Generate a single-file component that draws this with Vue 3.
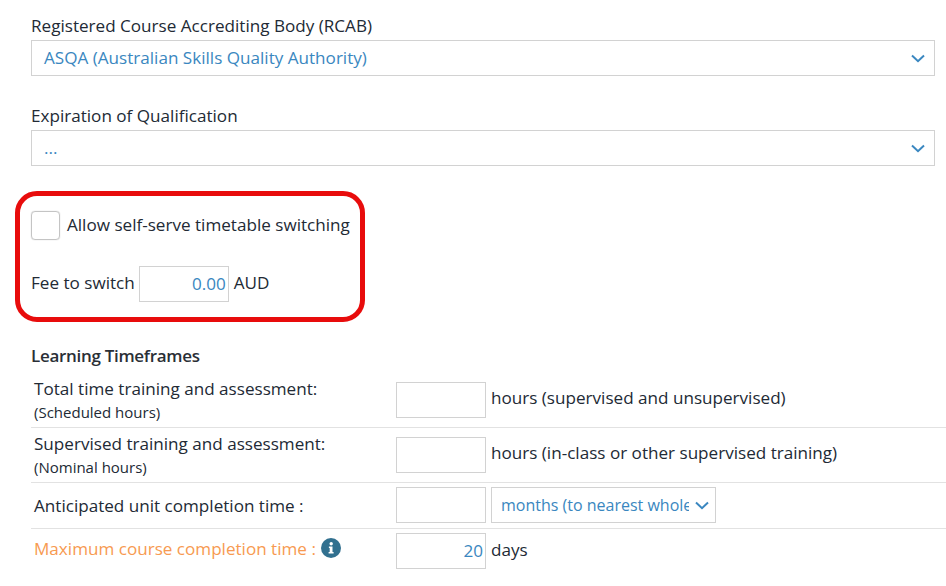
<template>
  <div class="page">
    <div class="field first">
      <label>Registered Course Accrediting Body (RCAB)</label>
      <div class="select">
        <span>ASQA (Australian Skills Quality Authority)</span>
        <svg class="chev" width="14" height="9" viewBox="0 0 14 9"><path d="M1 1.5 7 7.2l6-5.7" /></svg>
      </div>
    </div>
    <div class="field second">
      <label>Expiration of Qualification</label>
      <div class="select">
        <span>...</span>
        <svg class="chev" width="14" height="9" viewBox="0 0 14 9"><path d="M1 1.5 7 7.2l6-5.7" /></svg>
      </div>
    </div>

    <div class="callout">
      <div class="check-row">
        <span class="checkbox"></span>
        <span>Allow self-serve timetable switching</span>
      </div>
      <div class="fee-row">
        <span class="fee-text">Fee to switch</span>
        <span class="input">0.00</span>
        <span class="fee-text aud">AUD</span>
      </div>
    </div>

    <h4>Learning Timeframes</h4>
    <div class="rows">
      <div v-for="r in rows" :key="r.label" class="row">
        <div class="row-label" :class="{ warn: r.info, single: !r.sub && !r.info }">
          <div>{{ r.label }}<svg v-if="r.info" class="info" width="20" height="20" viewBox="0 0 20 20">
              <circle cx="10" cy="10" r="10" fill="#31708f" />
              <circle cx="10.2" cy="5.8" r="1.7" fill="#fff" />
              <path d="M7.9 8.6h3.6v5.4h1.1v1.5H7.6V14h1.1v-3.9h-.8z" fill="#fff" />
            </svg></div>
          <div v-if="r.sub" class="sub">{{ r.sub }}</div>
        </div>
        <span class="input">{{ r.value }}</span>
        <span v-if="r.unit" class="unit">{{ r.unit }}</span>
        <div v-else class="select small">
          <span class="clip">months (to nearest whole month)</span>
          <svg class="chev" width="14" height="9" viewBox="0 0 14 9"><path d="M1 1.5 7 7.2l6-5.7" /></svg>
        </div>
      </div>
    </div>
  </div>
</template>

<script setup>
const rows = [
  { label: 'Total time training and assessment:', sub: '(Scheduled hours)', value: '', unit: 'hours (supervised and unsupervised)' },
  { label: 'Supervised training and assessment:', sub: '(Nominal hours)', value: '', unit: 'hours (in-class or other supervised training)' },
  { label: 'Anticipated unit completion time :', value: '' },
  { label: 'Maximum course completion time :', value: '20', unit: 'days', info: true },
]
</script>

<style>
html,
body {
  background: #fff;
  overflow: hidden;
}
</style>

<style scoped>
.page {
  width: 946px;
  height: 586px;
  overflow: hidden;
  font-family: 'Open Sans', 'Liberation Sans', sans-serif;
  font-size: 17.1px;
  color: #222a35;
  box-sizing: border-box;
  padding-top: 15px;
}
.field {
  margin-left: 31px;
  width: 904px;
}
.field label {
  display: block;
  height: 25px;
  line-height: 22px;
}
.second {
  margin-top: 29px;
}
.select {
  height: 36px;
  box-sizing: border-box;
  border: 1px solid #d2d2d2;
  color: #3a87c0;
  display: flex;
  align-items: center;
  justify-content: space-between;
  padding: 0 9px 0 12px;
  line-height: 34px;
}
.chev {
  flex: none;
}
.chev path {
  fill: none;
  stroke: #3a87c0;
  stroke-width: 2;
}
.callout {
  margin: 25px 0 0 15px;
  width: 350px;
  height: 131px;
  box-sizing: border-box;
  border: 5px solid #e80c0c;
  border-radius: 22px;
  padding: 15px 0 0 11px;
}
.check-row {
  display: flex;
  align-items: center;
  gap: 7px;
  height: 29px;
}
.check-row span:last-child {
  margin-top: -2px;
}
.checkbox {
  width: 29px;
  height: 29px;
  box-sizing: border-box;
  border: 1px solid #c4c4c4;
  border-radius: 4px;
  box-shadow: 0 0 1px rgba(0, 0, 0, 0.3);
}
.fee-row {
  display: flex;
  align-items: center;
  gap: 4px;
  margin-top: 26px;
}
.fee-text {
  margin-top: -4px;
}
.aud {
  margin-left: 1px;
}
.input {
  width: 90px;
  height: 36px;
  flex: none;
  box-sizing: border-box;
  border: 1px solid #d2d2d2;
  color: #3a87c0;
  text-align: right;
  padding: 0 2px 0 0;
  line-height: 33px;
}
h4 {
  margin: 23px 0 0 31px;
  font-size: 17px;
  font-weight: 600;
  line-height: 22px;
  letter-spacing: -0.3px;
  color: #2a2f36;
}
.rows {
  margin: 6px 0 0 31px;
}
.row {
  display: flex;
  align-items: center;
  padding: 4px 0 5px;
  border-bottom: 1px solid #e2e2e2;
}
.row:last-child {
  border-bottom: none;
}
.row-label {
  width: 362px;
  flex: none;
  padding-left: 3px;
  line-height: 24px;
}
.single {
  padding-top: 2px;
}
.sub {
  font-size: 15px;
  line-height: 23px;
  margin-bottom: -2px;
}
.warn {
  color: #f79a51;
  align-self: flex-start;
  padding-top: 4px;
}
.info {
  margin-left: 5px;
  vertical-align: -2.5px;
}
.unit {
  margin-left: 5px;
  margin-top: -4px;
}
.small {
  width: 225px;
  margin-left: 5px;
  flex: none;
  padding: 0 6px 0 9px;
  font-size: 16px;
}
.clip {
  width: 188px;
  flex: none;
  overflow: hidden;
  white-space: nowrap;
}
</style>
